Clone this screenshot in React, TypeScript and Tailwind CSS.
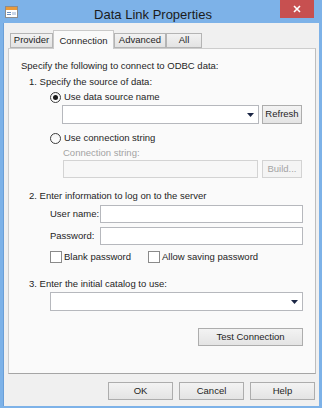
import React from 'react';

const font = "font-['Liberation_Sans',Arial,sans-serif]";

const Btn: React.FC<{ label: string; w: string; disabled?: boolean }> = ({ label, w, disabled }) => (
  <div
    className={`${w} h-[18px] flex items-center justify-center border text-[9.5px] ${
      disabled
        ? 'border-[#d3d3d3] bg-[#f4f4f4] text-[#a3a3a3]'
        : 'border-[#adadad] bg-gradient-to-b from-[#f3f3f3] to-[#e4e4e4] text-[#1e1e1e]'
    }`}
  >
    {label}
  </div>
);

const Arrow = () => (
  <svg width="7" height="4" viewBox="0 0 7 4" className="mr-[4px]">
    <path d="M0 0h7L3.5 4z" fill="#1b2645" />
  </svg>
);

const Combo: React.FC<{ w: string }> = ({ w }) => (
  <div className={`${w} h-[19px] bg-white border border-[#b6b8bd] flex items-center justify-end`}>
    <Arrow />
  </div>
);

const Radio: React.FC<{ checked?: boolean }> = ({ checked }) => (
  <div className="w-[11px] h-[11px] rounded-full border border-[#3c3c3c] bg-gradient-to-b from-[#f4f4f4] to-white flex items-center justify-center">
    {checked && <div className="w-[5px] h-[5px] rounded-full bg-[#1a1a1a]" />}
  </div>
);

const Check = () => <div className="w-[12px] h-[12px] border border-[#8a8a8a] bg-white" />;

const Tab: React.FC<{ label: string; w: string; active?: boolean }> = ({ label, w, active }) =>
  active ? (
    <div className={`${w} h-[19px] -mb-px relative z-10 border border-b-0 border-[#c9c9c9] bg-[#fafafa] flex items-start justify-center pt-[3px]`}>
      {label}
    </div>
  ) : (
    <div className={`${w} h-[15px] border border-[#b4b4b4] bg-gradient-to-b from-[#f2f2f2] to-[#e3e3e3] flex items-center justify-center`}>
      {label}
    </div>
  );

export default function App() {
  return (
    <div className={`w-[322px] h-[408px] bg-[#7db2e8] flex flex-col ${font} text-[#1e1e1e]`}>
      {/* title bar */}
      <div className="h-[23px] flex items-start shrink-0">
        <svg width="13" height="12" viewBox="0 0 13 12" className="ml-[5px] mt-[6px]">
          <rect x="0.5" y="0.5" width="12" height="11" fill="#fff" stroke="#8c8c8c" />
          <rect x="1" y="1" width="11" height="3" fill="#e89a3c" />
          <rect x="2" y="6" width="4" height="1" fill="#6b8fc0" />
          <rect x="2" y="8" width="4" height="1" fill="#6b8fc0" />
          <rect x="7" y="6" width="4" height="3" fill="#c9d6e8" />
        </svg>
        <div className="flex-1 text-center text-[13px] text-[#1b1b1b] mt-[5px] pl-[8px]">Data Link Properties</div>
        <div className="w-[34px] h-[18px] bg-[#c75050] flex items-center justify-center mr-[8px]">
          <svg width="8" height="8" viewBox="0 0 8 8">
            <path d="M1 1l6 6M7 1l-6 6" stroke="#fff" strokeWidth="1.6" />
          </svg>
        </div>
      </div>

      {/* body */}
      <div className="flex-1 mx-[3px] mb-[2px] bg-[#f0f0f0] flex flex-col text-[9.5px] border-l border-[#6a9fd8]">
        {/* tabs */}
        <div className="mt-[7px] ml-[6px] h-[18px] flex items-end">
          <Tab label="Provider" w="w-[43px]" />
          <Tab label="Connection" w="w-[61px]" active />
          <Tab label="Advanced" w="w-[52px]" />
          <Tab label="All" w="w-[36px]" />
        </div>

        {/* panel */}
        <div className="ml-[4px] w-[308px] h-[326px] border border-[#cdcdcd] border-b-[#a5a5a5] border-r-[#bdbdbd] bg-[#fafafa] flex flex-col">
          <div className="h-[16px] mt-[9px] ml-[12px] flex items-center">Specify the following to connect to ODBC data:</div>
          <div className="h-[16px] ml-[20px] flex items-center">1. Specify the source of data:</div>
          <div className="h-[15px] ml-[41px] flex items-center gap-[3px]">
            <Radio checked />
            <span>Use data source name</span>
          </div>
          <div className="ml-[53px] flex gap-[3px]">
            <Combo w="w-[197px]" />
            <div className="h-[19px] w-[40px] flex items-center justify-center border border-[#adadad] bg-gradient-to-b from-[#f3f3f3] to-[#e4e4e4]">Refresh</div>
          </div>
          <div className="h-[16px] mt-[6px] ml-[41px] flex items-center gap-[3px]">
            <Radio />
            <span>Use connection string</span>
          </div>
          <div className="h-[14px] ml-[54px] flex items-center text-[#a3a3a3]">Connection string:</div>
          <div className="ml-[54px] flex gap-[4px]">
            <div className="w-[195px] h-[18px] border border-[#d3d3d3] bg-[#f7f7f7]" />
            <Btn label="Build..." w="w-[40px]" disabled />
          </div>
          <div className="h-[16px] mt-[10px] ml-[20px] flex items-center">2. Enter information to log on to the server</div>
          <div className="mt-[1px] ml-[41px] flex items-center">
            <span className="w-[50px]">User name:</span>
            <div className="w-[203px] h-[18px] border border-[#b6b8bd] bg-white" />
          </div>
          <div className="mt-[4px] ml-[41px] flex items-center">
            <span className="w-[50px]">Password:</span>
            <div className="w-[203px] h-[18px] border border-[#b6b8bd] bg-white" />
          </div>
          <div className="h-[14px] mt-[5px] ml-[41px] flex items-center">
            <div className="flex items-center gap-[2px] w-[98px]">
              <Check />
              <span>Blank password</span>
            </div>
            <div className="flex items-center gap-[2px]">
              <Check />
              <span>Allow saving password</span>
            </div>
          </div>
          <div className="h-[15px] mt-[13px] ml-[20px] flex items-center">3. Enter the initial catalog to use:</div>
          <div className="ml-[41px]">
            <Combo w="w-[253px]" />
          </div>
          <div className="mt-[17px] ml-[189px]">
            <Btn label="Test Connection" w="w-[105px]" />
          </div>
        </div>

        {/* dialog buttons */}
        <div className="mt-[8px] flex justify-end gap-[6px] pr-[4px]">
          <Btn label="OK" w="w-[65px]" />
          <Btn label="Cancel" w="w-[65px]" />
          <Btn label="Help" w="w-[65px]" />
        </div>
      </div>
    </div>
  );
}
